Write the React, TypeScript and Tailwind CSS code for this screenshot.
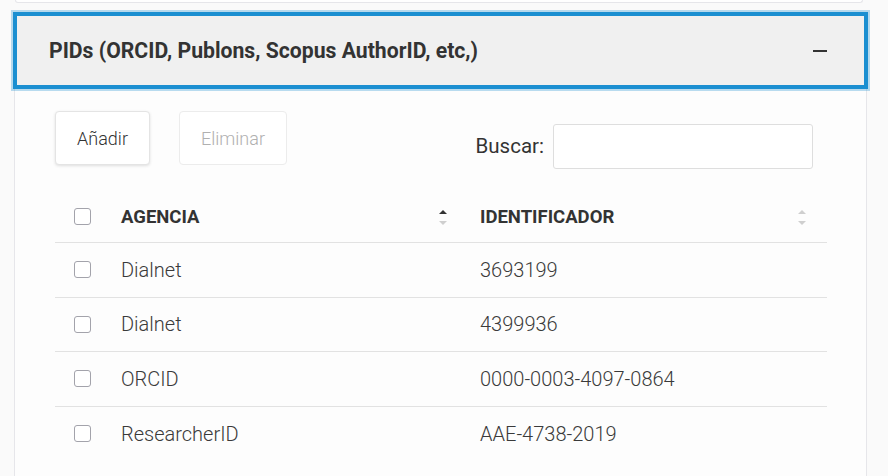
import React from 'react';

const rows = [
  { agency: 'Dialnet', id: '3693199' },
  { agency: 'Dialnet', id: '4399936' },
  { agency: 'ORCID', id: '0000-0003-4097-0864' },
  { agency: 'ResearcherID', id: 'AAE-4738-2019' },
];

function Checkbox() {
  return <div className="w-[17px] h-[17px] rounded-[3px] border border-[#a3a3ab] bg-white" />;
}

function SortIcon({ active }: { active?: boolean }) {
  return (
    <div className="flex flex-col items-center gap-[7px]">
      <div
        className={`w-0 h-0 border-x-[4px] border-x-transparent border-b-[4px] ${
          active ? 'border-b-[#333]' : 'border-b-[#cfcfcf]'
        }`}
      />
      <div className="w-0 h-0 border-x-[4px] border-x-transparent border-t-[4px] border-t-[#cfcfcf]" />
    </div>
  );
}

export default function App() {
  return (
    <div className="min-h-screen bg-[#fafafa] font-['Roboto',sans-serif] text-[#333] overflow-hidden">
      {/* Previous card edge */}
      <div className="ml-[15px] w-[848px] h-[3px] bg-white border-x border-b border-[#e6e6ea] rounded-b-[4px]" />

      {/* Panel */}
      <div className="ml-[14px] w-[853px] mt-[9px] h-[470px] border-x border-[#e6e6ea] bg-[#fdfdfd]">
        {/* Header */}
        <div className="-mx-[2px] mt-[2px] h-[77px] border-4 border-[#1b8fd1] shadow-[0_0_0_2px_rgba(27,143,209,0.3)] bg-[#f0f0f0] flex items-center justify-between pl-[32px] pr-[37px]">
          <h2 className="text-[21.2px] font-bold text-[#333] leading-none">
            PIDs (ORCID, Publons, Scopus AuthorID, etc,)
          </h2>
          <div className="w-[14px] h-[2px] bg-[#333]" />
        </div>

        <div className="pl-[40px] pr-[39px] pt-[22px]">
          {/* Toolbar */}
          <div className="flex items-start justify-between">
            <div className="flex gap-[29px]">
              <button className="w-[95px] h-[54px] rounded-[4px] bg-white border border-[#e4e4e4] shadow-[0_1px_3px_rgba(0,0,0,0.12)] text-[18px] font-light text-[#333]">
                Añadir
              </button>
              <button
                disabled
                className="w-[108px] h-[54px] rounded-[4px] bg-white border border-[#ececec] text-[18px] font-light text-[#b0b0b0]"
              >
                Eliminar
              </button>
            </div>
            <div className="flex items-center gap-[9px] mt-[13px] mr-[14px]">
              <span className="text-[20.5px] text-[#333]">Buscar:</span>
              <input className="w-[260px] h-[45px] rounded-[3px] border border-[#dedede] bg-white outline-none" />
            </div>
          </div>

          {/* Table */}
          <div className="mt-[21px]">
            <div className="grid grid-cols-[66px_359px_1fr] h-[53px] items-center border-b border-[#e2e2e2]">
              <div className="pl-[19px]">
                <Checkbox />
              </div>
              <div className="flex items-center justify-between pt-[3px] pr-[33px] text-[18.5px] font-bold uppercase text-[#333]">
                <span>Agencia</span>
                <SortIcon active />
              </div>
              <div className="flex items-center justify-between pt-[3px] pr-[21px] text-[18.5px] font-bold uppercase text-[#333]">
                <span>Identificador</span>
                <SortIcon />
              </div>
            </div>
            {rows.map((r, i) => (
              <div
                key={i}
                className={`grid grid-cols-[66px_359px_1fr] h-[54.5px] items-center ${
                  i < rows.length - 1 ? 'border-b border-[#e2e2e2]' : ''
                }`}
              >
                <div className="pl-[19px]">
                  <Checkbox />
                </div>
                <div className="text-[20px] font-light text-[#3a3a3a]">{r.agency}</div>
                <div className="text-[20px] font-light text-[#3a3a3a]">{r.id}</div>
              </div>
            ))}
          </div>
        </div>
      </div>
    </div>
  );
}
